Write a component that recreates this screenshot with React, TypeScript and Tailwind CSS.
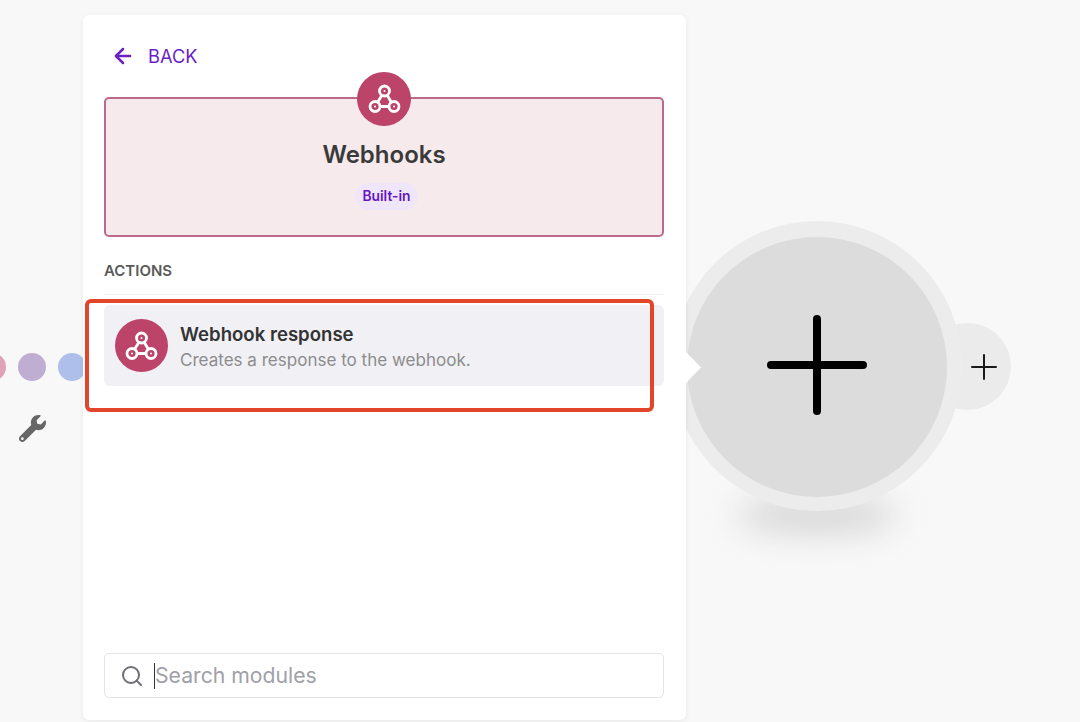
import { ArrowLeft, Search } from 'lucide-react';
import { FaWrench } from 'react-icons/fa';

function ModuleIcon({ className }: { className: string }) {
  return (
    <div className={`flex items-center justify-center rounded-full bg-[#bb4468] ${className}`}>
      <svg width="33" height="30" viewBox="0 0 33 30" fill="none" stroke="#fff" strokeWidth="2.8" strokeLinecap="round" strokeLinejoin="round">
        <path d="M16.5 7 7 22.5h19z" />
        <circle cx="16.5" cy="7" r="5" fill="#bb4468" />
        <circle cx="7" cy="22.5" r="5" fill="#bb4468" />
        <circle cx="26" cy="22.5" r="5" fill="#bb4468" />
        <circle cx="16.5" cy="7" r="1" fill="#fff" stroke="none" />
        <circle cx="7" cy="22.5" r="1" fill="#fff" stroke="none" />
        <circle cx="26" cy="22.5" r="1" fill="#fff" stroke="none" />
      </svg>
    </div>
  );
}

export default function App() {
  return (
    <div className="relative h-[722px] w-[1080px] overflow-hidden bg-[#f8f8f8] font-['Inter',sans-serif]">
      {/* canvas behind the panel */}
      <div className="absolute left-[-22px] top-[353px] h-[28px] w-[28px] rounded-full bg-[#e0a2b8]" />
      <div className="absolute left-[18px] top-[353px] h-[28px] w-[28px] rounded-full bg-[#c0aed2]" />
      <div className="absolute left-[58px] top-[353px] h-[28px] w-[28px] rounded-full bg-[#aebfec]" />
      <FaWrench className="absolute left-[19px] top-[415px] text-[#666666]" size={27} />

      <div className="absolute left-[737px] top-[495px] h-[40px] w-[160px] rounded-[50%] bg-[#d8d8d8] blur-[16px]" />
      <div className="absolute left-[924px] top-[323px] h-[87px] w-[87px] rounded-full bg-[#ebebeb]" />
      <div className="absolute left-[672px] top-[221px] h-[290px] w-[290px] rounded-full bg-[#ececec]" />
      <div className="absolute left-[687px] top-[237px] flex h-[260px] w-[260px] items-center justify-center rounded-full bg-[#dcdcdc]">
        <svg className="mb-[4px]" width="102" height="102" viewBox="0 0 102 102" fill="none" stroke="#000" strokeWidth="8" strokeLinecap="round">
          <path d="M51 5v92M5 51h92" />
        </svg>
      </div>
      <svg className="absolute left-[971px] top-[354px]" width="26" height="26" viewBox="0 0 26 26" fill="none" stroke="#1a1a1a" strokeWidth="2" strokeLinecap="round">
        <path d="M13 1v24M1 13h24" />
      </svg>

      {/* side panel */}
      <div className="relative ml-[83px] flex h-[705px] w-[603px] translate-y-[15px] flex-col rounded-[6px] bg-white pl-[21px] pr-[22px] shadow-[0_1px_5px_rgba(0,0,0,0.07)]">
        <div className="flex h-[82px] items-center gap-[13px] pl-[7px] text-[#6a1fc4]">
          <ArrowLeft size={24} strokeWidth={2.5} />
          <span className="text-[18.3px] leading-none">BACK</span>
        </div>

        <div className="relative flex h-[140px] flex-col items-center rounded-[5px] border-2 border-[#bd6a8a] bg-[#f7eaed]">
          <ModuleIcon className="absolute top-[-27px] h-[54px] w-[54px]" />
          <div className="mt-[40px] text-[24px] font-semibold leading-[32px] text-[#3a3a3a]">Webhooks</div>
          <div className="ml-[5px] mt-[12px] flex h-[27px] w-[63px] items-center justify-center rounded-full bg-[#efe6fa] text-[13.8px] font-semibold text-[#6514c4]">
            Built-in
          </div>
        </div>

        <div className="mt-[25px] border-b border-[#f0f0f0] pb-[14px] text-[15px] font-semibold leading-[18px] text-[#5a5a5a]">
          ACTIONS
        </div>

        <div className="mt-[10px] flex h-[81px] items-center gap-[12px] rounded-[6px] bg-[#f0f0f5] pl-[11px]">
          <ModuleIcon className="h-[53px] w-[53px]" />
          <div className="pt-[3px]">
            <div className="text-[18.6px] font-semibold leading-[26px] text-[#333333]">Webhook response</div>
            <div className="text-[17.05px] leading-[26px] text-[#8c8c8c]">Creates a response to the webhook.</div>
          </div>
        </div>

        <div className="mt-auto mb-[22px] flex h-[45px] items-center rounded-[5px] border border-[#e4e4e6] pl-[15px]">
          <Search size={24} color="#6e6e76" strokeWidth={2} />
          <span className="ml-[10px] h-[26px] w-px bg-[#333333]" />
          <span className="text-[21.2px] text-[#a0a0a8]">Search modules</span>
        </div>
      </div>

      {/* notch pointing at the panel's node */}
      <div className="absolute left-[686px] top-[352px] h-[31px] w-[15px] bg-white [clip-path:polygon(0_0,100%_50%,0_100%)]" />

      {/* highlight drawn over the screenshot */}
      <div className="absolute left-[85px] top-[299px] h-[113px] w-[569px] rounded-[6px] border-4 border-[#e2452a]" />
    </div>
  );
}
